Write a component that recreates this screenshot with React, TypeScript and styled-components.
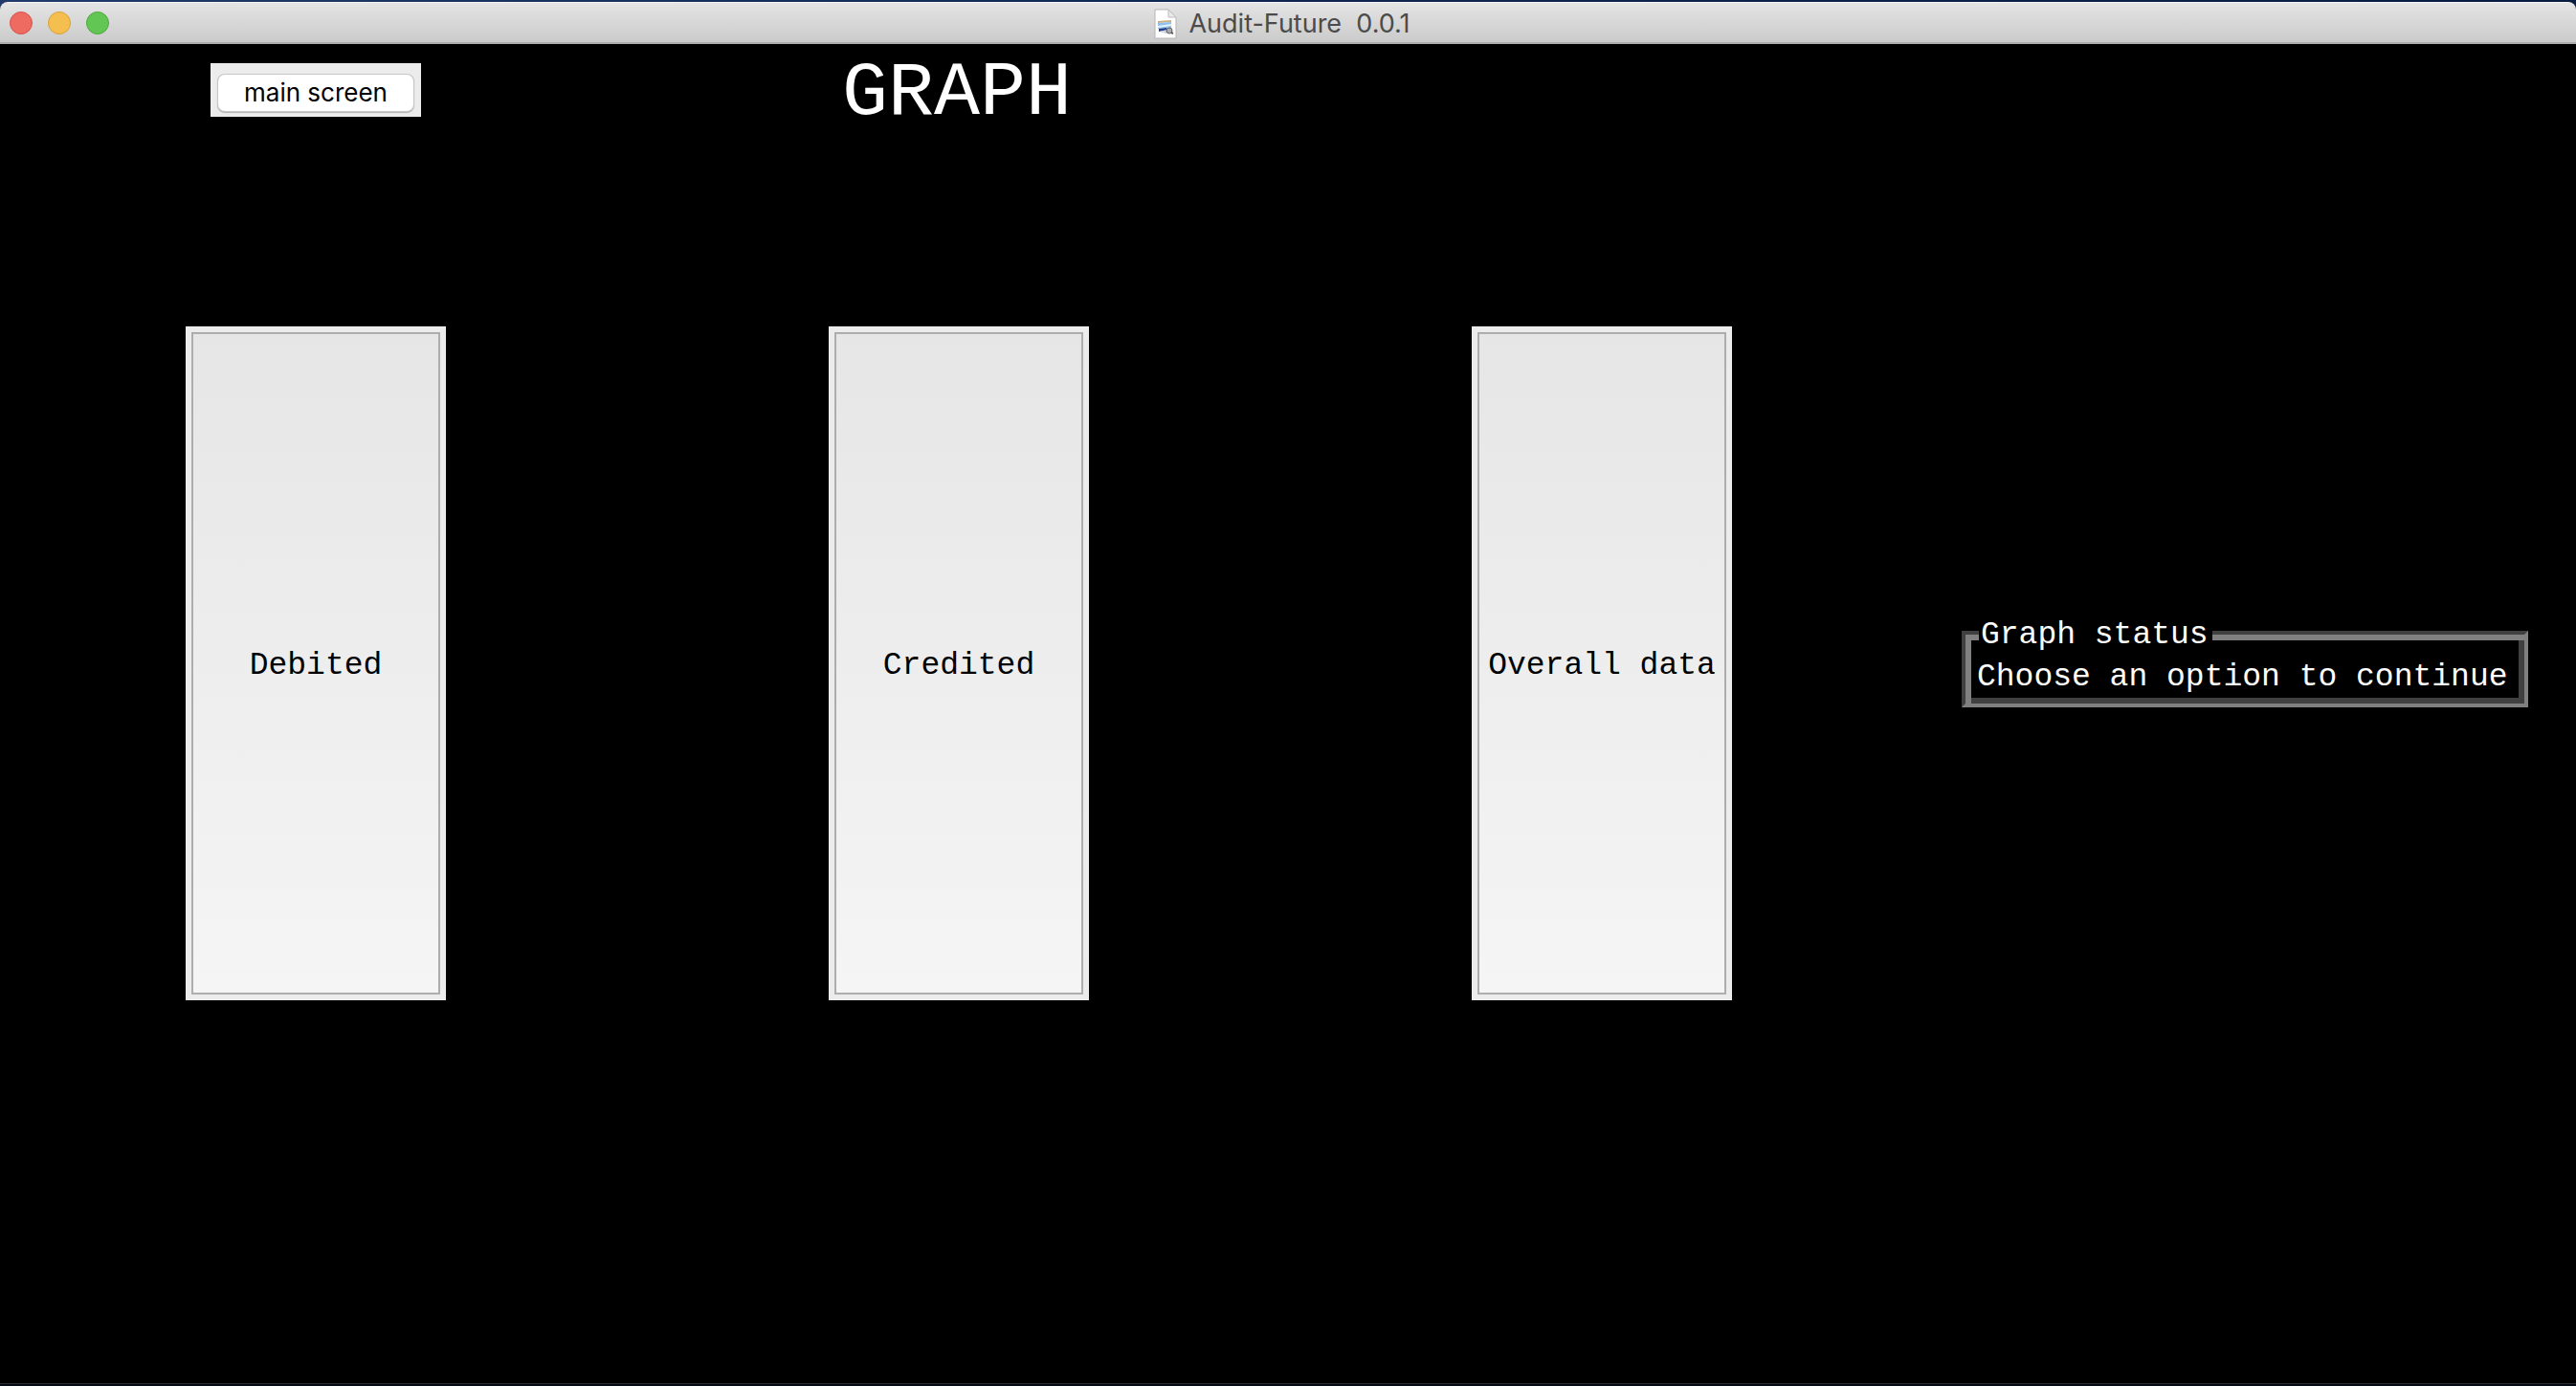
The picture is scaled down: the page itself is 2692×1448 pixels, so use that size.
import React, { useState } from "react";
import styled, { createGlobalStyle } from "styled-components";

const mono = `"Liberation Mono", "Courier New", monospace`;
const sans = `Inter, "Liberation Sans", sans-serif`;

const GlobalStyle = createGlobalStyle`
  * { box-sizing: border-box; }
  body { margin: 0; background: #000; }
`;

const Desktop = styled.div`
  display: flex;
  flex-direction: column;
  min-height: 100vh;
  padding: 2px 0;
  background: linear-gradient(90deg, #203a6b 0%, #0d2550 50%, #081c42 100%) top / 100% 50% no-repeat #060c16;
`;

const AppWindow = styled.div`
  display: flex;
  flex: 1;
  flex-direction: column;
  overflow: hidden;
  border-radius: 8px 8px 0 0;
  border-bottom: 1px solid #2c2c2c;
  background: #000;
`;

const TitleBar = styled.header`
  display: grid;
  grid-template-columns: 1fr auto 1fr;
  align-items: center;
  height: 44px;
  padding: 0 22px 0 10px;
  border-top: 1px solid #f4f4f4;
  border-bottom: 2px solid #adadad;
  background: linear-gradient(#e4e4e4, #cbcbcb);
`;

const WindowControls = styled.div`
  display: flex;
  gap: 16px;
`;

const ControlDot = styled.button<{ $fill: string; $edge: string }>`
  width: 24px;
  height: 24px;
  padding: 0;
  border: 1px solid ${(p) => p.$edge};
  border-radius: 50%;
  background: ${(p) => p.$fill};
`;

const WindowTitle = styled.div`
  display: flex;
  align-items: center;
  gap: 12px;
  padding-top: 2px;
  color: #4b4b4b;
  font: 400 27px/32px ${sans};
  white-space: pre;
`;

const Screen = styled.main`
  display: grid;
  flex: 1;
  grid-template-columns: repeat(4, 1fr);
  grid-template-rows: 96px 11fr 2fr;
  column-gap: 12px;
  place-items: center;
  padding-right: 16px;
`;

const Heading = styled.h1`
  margin: 0;
  padding: 8px 4px 0 0;
  color: #fff;
  font: 400 80px/88px ${mono};
`;

const ButtonFrame = styled.div`
  padding: 12px 8px 6px;
  background: #ececec;
`;

const PushButton = styled.button`
  display: block;
  width: 204px;
  height: 38px;
  padding: 0;
  border: 0;
  border-radius: 7px;
  background: #fff;
  box-shadow: 0 0 0 1px #c6c6c6, 0 1px 1px 1px #b4b4b4;
  color: #000;
  font: 400 26px/32px ${sans};
`;

const TileFrame = styled.div`
  padding: 6px;
  background: #ececec;
`;

const TileButton = styled.button`
  display: block;
  width: 260px;
  height: 692px;
  padding: 6px 0 0;
  border: 2px solid #adadad;
  background: linear-gradient(#e6e6e6, #f5f5f5);
  color: #000;
  font: 400 33px/40px ${mono};
`;

const StatusGroup = styled.fieldset`
  width: 592px;
  min-width: 0;
  margin: 0 0 8px;
  padding: 6px 8px 7px 12px;
  border: 4px solid;
  border-color: #404040 #808080 #808080 #404040;
  box-shadow: inset 6px 6px 0 #808080, inset -6px -6px 0 #404040;
  color: #fff;
  font: 400 33px/40px ${mono};
`;

const StatusLegend = styled.legend`
  margin-left: 2px;
  padding: 6px 4px 0 2px;
  background: #000;
  line-height: 36px;
`;

const StatusText = styled.output`
  display: block;
  white-space: nowrap;
`;

function DocumentIcon() {
  return (
    <svg width="24" height="32" viewBox="0 0 24 32" aria-hidden="true">
      <path d="M1 1h14l8 8v22H1z" fill="#fff" stroke="#b5b5b5" />
      <path d="M15 1v8h8z" fill="#e9e9e9" stroke="#bdbdbd" />
      <path d="M4 13l14-1v2L4 15z" fill="#c9b184" />
      <path d="M4 15l14-1v6L4 21z" fill="#8fc0ee" />
      <path d="M4 18l14-2v2L4 20z" fill="#e4f0fa" />
      <path d="M5 21l8-1 1 2-9 2z" fill="#23418c" />
      <path d="M6 24l7-1v3z" fill="#c9cdd6" />
      <circle cx="16" cy="23" r="3" fill="#a9adb2" stroke="#5c5f65" />
      <path d="M18 25l2 1" stroke="#6c5a4c" strokeWidth="2" />
    </svg>
  );
}

const options = ["Debited", "Credited", "Overall data"];

export default function App() {
  const [status] = useState("Choose an option to continue");
  return (
    <>
      <GlobalStyle />
      <Desktop>
        <AppWindow>
          <TitleBar>
            <WindowControls>
              <ControlDot aria-label="Close" $fill="#ed6b60" $edge="#d6544b" />
              <ControlDot aria-label="Minimize" $fill="#f5bf4f" $edge="#d9a13c" />
              <ControlDot aria-label="Zoom" $fill="#62c655" $edge="#4ea73f" />
            </WindowControls>
            <WindowTitle>
              <DocumentIcon />
              <span>{"Audit-Future  0.0.1"}</span>
            </WindowTitle>
          </TitleBar>
          <Screen>
            <ButtonFrame>
              <PushButton type="button">main screen</PushButton>
            </ButtonFrame>
            <Heading>GRAPH</Heading>
            <span />
            <span />
            {options.map((label) => (
              <TileFrame key={label}>
                <TileButton type="button">{label}</TileButton>
              </TileFrame>
            ))}
            <StatusGroup>
              <StatusLegend>Graph status</StatusLegend>
              <StatusText>{status}</StatusText>
            </StatusGroup>
          </Screen>
        </AppWindow>
      </Desktop>
    </>
  );
}
